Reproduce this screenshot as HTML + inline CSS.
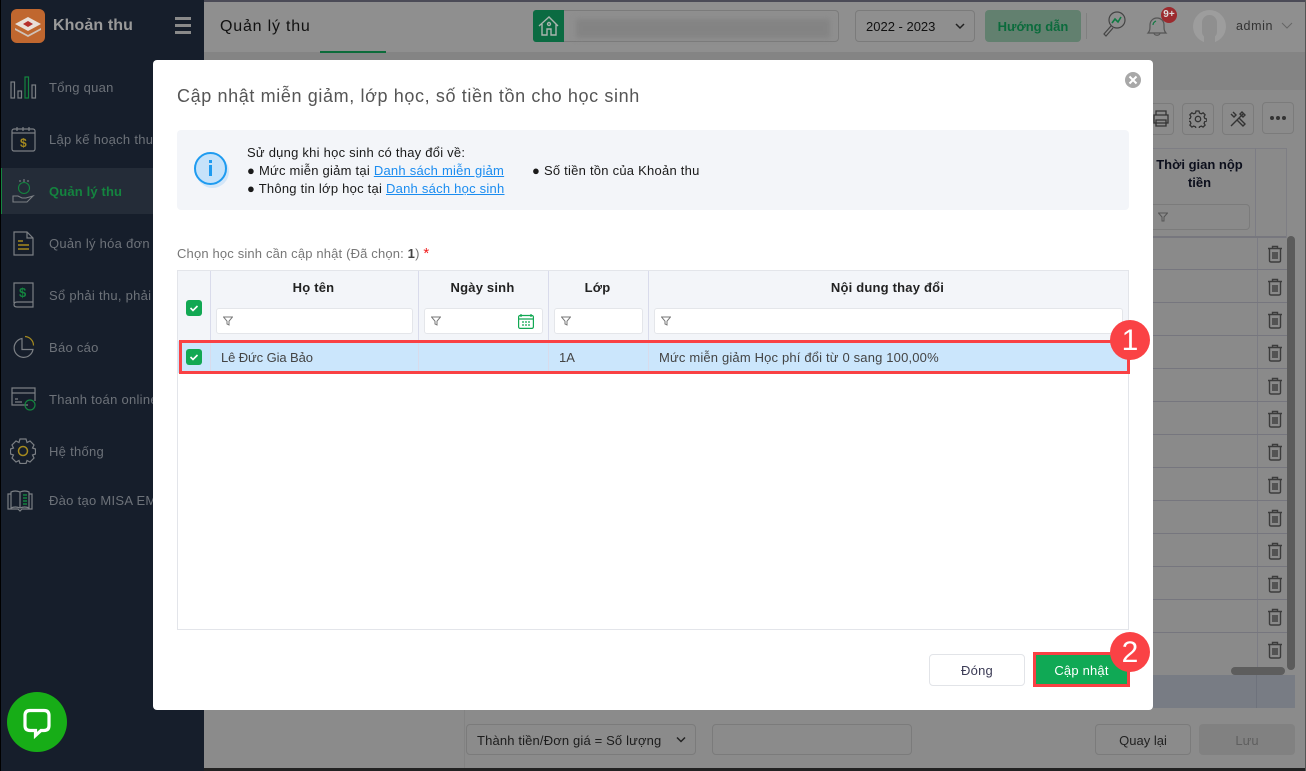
<!DOCTYPE html>
<html lang="vi"><head><meta charset="utf-8"><title>Khoản thu</title>
<style>
*{box-sizing:border-box}
html,body{margin:0;padding:0;width:1306px;height:771px;overflow:hidden;background:#8b8b8b}
body{position:relative;font-family:"Liberation Sans","Noto Sans CJK SC",sans-serif;font-size:13px;color:#222}
.a{position:absolute}
.t{position:absolute;white-space:nowrap;line-height:18px;transform:translateY(1px)}
.m{position:absolute;left:49px;white-space:nowrap;color:#6d7279;font-size:13px;line-height:18px;letter-spacing:.28px;transform:translateY(1px)}
.b{position:absolute;border:1px solid #7b7b7b;border-radius:4px}
.th{position:absolute;text-align:center;font-weight:700;font-size:13px;color:#222;top:278px;line-height:18px;letter-spacing:.2px;transform:translate(-1px,1px)}
.inp{position:absolute;top:308px;height:26px;background:#fff;border:1px solid #e4e6ea;border-radius:3px}
.inp svg{position:absolute;left:6px;top:7px}
.cb{position:absolute;left:186px;width:16px;height:16px;border-radius:3px;background:#12a853}
.vl{position:absolute;width:1px}
.tr{position:absolute;left:1267px}
.i{letter-spacing:.24px}
</style></head><body>
<!-- background app -->
<div class="a" style="left:0;top:0;width:1306px;height:2px;background:#4b4b57"></div>
<div class="a" style="left:204px;top:2px;width:1102px;height:50px;background:#8f8f8f"></div>
<div class="a" style="left:204px;top:52px;width:1102px;height:38px;background:#848484"></div>
<div class="a" style="left:320px;top:51px;width:66px;height:2px;background:#0c6b3a"></div>
<div class="t" style="left:220px;top:16px;font-size:16px;line-height:20px;color:#111;letter-spacing:.8px">Quản lý thu</div>
<div class="b" style="left:533px;top:10px;width:306px;height:32px"></div>
<div class="a" style="left:533px;top:10px;width:31px;height:32px;background:#0b6b42;border-radius:3px 0 0 3px"></div>
<svg class="a" style="left:538px;top:15px" width="22" height="22" viewBox="0 0 22 22" fill="none" stroke="#a9b5ae" stroke-width="1.4"><path d="M1 11 11 2l9 9M4 9v11h5v-6h4v6h5V9"/><circle cx="11" cy="9" r="1.5"/></svg>
<div class="a" style="left:576px;top:19px;width:254px;height:19px;background:#838383;filter:blur(3px)"></div>
<div class="b" style="left:855px;top:10px;width:120px;height:32px"></div>
<div class="t" style="left:866px;top:17px;color:#111;font-size:13px">2022 - 2023</div>
<svg class="a" style="left:955px;top:22px" width="10" height="8" viewBox="0 0 10 8" fill="none" stroke="#222" stroke-width="1.5"><path d="M1 2l4 4 4-4"/></svg>
<div class="a" style="left:985px;top:10px;width:96px;height:32px;background:#62806f;border-radius:4px"></div>
<div class="t" style="left:985px;top:17px;width:96px;text-align:center;font-weight:700;color:#0b6b3c;font-size:13px">Hướng dẫn</div>
<div class="a" style="left:1086px;top:13px;width:1px;height:26px;background:#808080"></div>
<svg class="a" style="left:1102px;top:11px" width="26" height="26" viewBox="0 0 26 26" fill="none" stroke="#444" stroke-width="1.2"><circle cx="15" cy="9" r="8"/><path d="M9 15 2 23l2 2 7-8"/><path d="M10 12l3-4 3 3 3-5" stroke="#0f7a42" stroke-width="1.6"/></svg>
<svg class="a" style="left:1145px;top:12px" width="24" height="26" viewBox="0 0 24 26" fill="none" stroke="#555" stroke-width="1.2"><path d="M3 21c2-2 2-4 2-8 0-4 3-7 7-7s7 3 7 7c0 4 0 6 2 8zM9 21c0 3 6 3 6 0"/><path d="M8 13c0-2 1-3 3-4" stroke="#0f7a42"/></svg>
<div class="a" style="left:1161px;top:7px;width:16px;height:16px;border-radius:50%;background:#9c2a2e;color:#ddd;font-size:10px;font-weight:700;text-align:center;line-height:16px">9+</div>
<div class="a" style="left:1193px;top:10px;width:33px;height:33px;border-radius:50%;background:#9d9d9d"></div>
<div class="a" style="left:1202px;top:15px;width:15px;height:24px;border-radius:8px;background:#8f8f8f"></div>
<div class="a" style="left:1204px;top:32px;width:11px;height:12px;background:#8f8f8f"></div>
<div class="t" style="left:1236px;top:16px;color:#333;font-size:12.5px;letter-spacing:.6px">admin</div>
<svg class="a" style="left:1281px;top:22px" width="12" height="8" viewBox="0 0 12 8" fill="none" stroke="#666" stroke-width="1"><path d="M1 1l5 5 5-5"/></svg>
<!-- toolbar behind -->
<div class="b" style="left:1150px;top:103px;width:24px;height:32px;border-left:0;border-radius:0 4px 4px 0"></div>
<svg class="a" style="left:1153px;top:109px" width="16" height="20" viewBox="0 0 16 20" fill="none" stroke="#333" stroke-width="1.3"><path d="M3 6V2h10v4M1 6h14v8H1zM3 11h10v6H3z"/></svg>
<div class="b" style="left:1182px;top:103px;width:32px;height:32px"></div>
<svg class="a" style="left:1189px;top:110px" width="18" height="18" viewBox="0 0 18 18" fill="none" stroke="#333" stroke-width="1.3"><circle cx="9" cy="9" r="2.7"/><path d="M7.5 1.500h3l.5 2 1.800.8 1.800-1 2 2-1 1.900.7 1.800 2 .5v2l-2 .5-.7 1.800 1 1.800-2 2-1.800-1-1.800.7-.5 2h-3l-.5-2-1.800-.7-1.800 1-2-2 1-1.800-.7-1.800-2-.5v-2l2-.5.7-1.800-1-1.900 2-2 1.800 1 1.800-.8z" transform="translate(-.5 -.5) scale(1)"/></svg>
<div class="b" style="left:1222px;top:103px;width:32px;height:32px"></div>
<svg class="a" style="left:1229px;top:110px" width="18" height="18" viewBox="0 0 18 18" fill="none" stroke="#333" stroke-width="1.4"><path d="M2 16 14 4M4 2l3 3-2 2-3-3M16 14l-2 2-6-6 2-2zM13 2l3 3-2 2-3-3z"/></svg>
<div class="b" style="left:1262px;top:102px;width:32px;height:32px"></div>
<div class="a" style="left:1270px;top:116px;width:4px;height:4px;border-radius:50%;background:#333;box-shadow:6px 0 #333,12px 0 #333"></div>
<!-- table behind -->
<div class="a" style="left:1153px;top:148px;width:134px;height:560px;border-top:1px solid #7e7e84;background:#8a8a8a"></div>
<div class="a" style="left:1153px;top:236px;width:134px;height:2px;background:#77777e"></div>
<div class="vl" style="left:1255px;top:148px;height:88px;background:#7c7c84"></div>
<div class="vl" style="left:1257px;top:238px;height:437px;background:#7c7c84"></div>
<div class="a" style="left:1286px;top:148px;width:1px;height:90px;background:#7e7e84"></div>
<div class="t" style="left:1153px;top:155px;width:93px;text-align:center;font-weight:700;color:#0c0f1c;font-size:13px;white-space:normal">Thời gian nộp tiền</div>
<div class="b" style="left:1148px;top:204px;width:102px;height:26px"></div>
<svg class="a" style="left:1158px;top:212px" width="10" height="10" viewBox="0 0 10 10" fill="none" stroke="#555"><path d="M.5 1h9L6 5v4H4V5z"/></svg>
<div class="a" style="left:1153px;top:269px;width:134px;height:396px;background:repeating-linear-gradient(to bottom,#76767e 0 1px,transparent 1px 33px)"></div>
<div class="a" style="left:1153px;top:675px;width:142px;height:33px;background:#787c84"></div>
<div class="vl" style="left:1256px;top:675px;height:33px;background:#6e727c"></div>
<div class="a" style="left:1287px;top:236px;width:8px;height:434px;background:#5b5b5b;border-radius:4px"></div>
<div class="a" style="left:1231px;top:667px;width:54px;height:8px;background:#5d5d5d;border-radius:4px"></div>
<svg width="0" height="0" style="position:absolute"><defs><symbol id="tr" viewBox="0 0 16 18"><path d="M1 3.500h14M5.500 3.500V1.500h5v2M2.500 3.500v12q0 1.500 1.500 1.500h8q1.500 0 1.500-1.500v-12M6 7v7M8 7v7M10 7v7" fill="none" stroke="#3c3c3c" stroke-width="1.400"/></symbol><symbol id="fl" viewBox="0 0 10 10"><path d="M.5 1h9L6 5.200V9L4 8V5.200z" fill="none" stroke="#777" stroke-width="1"/></symbol></defs></svg>
<svg class="tr" style="top:245px" width="16" height="18"><use href="#tr"/></svg>
<svg class="tr" style="top:278px" width="16" height="18"><use href="#tr"/></svg>
<svg class="tr" style="top:311px" width="16" height="18"><use href="#tr"/></svg>
<svg class="tr" style="top:344px" width="16" height="18"><use href="#tr"/></svg>
<svg class="tr" style="top:377px" width="16" height="18"><use href="#tr"/></svg>
<svg class="tr" style="top:410px" width="16" height="18"><use href="#tr"/></svg>
<svg class="tr" style="top:443px" width="16" height="18"><use href="#tr"/></svg>
<svg class="tr" style="top:476px" width="16" height="18"><use href="#tr"/></svg>
<svg class="tr" style="top:509px" width="16" height="18"><use href="#tr"/></svg>
<svg class="tr" style="top:542px" width="16" height="18"><use href="#tr"/></svg>
<svg class="tr" style="top:575px" width="16" height="18"><use href="#tr"/></svg>
<svg class="tr" style="top:608px" width="16" height="18"><use href="#tr"/></svg>
<svg class="tr" style="top:641px" width="16" height="18"><use href="#tr"/></svg>
<!-- footer behind -->
<div class="vl" style="left:464px;top:710px;height:58px;background:#838383"></div>
<div class="b" style="left:466px;top:724px;width:230px;height:31px"></div>
<div class="t" style="left:477px;top:731px;color:#1c1c1c;font-size:13px;letter-spacing:.15px">Thành tiền/Đơn giá = Số lượng</div>
<svg class="a" style="left:676px;top:736px" width="10" height="8" viewBox="0 0 10 8" fill="none" stroke="#222" stroke-width="1.500"><path d="M1 1.500l4 4 4-4"/></svg>
<div class="b" style="left:712px;top:724px;width:200px;height:31px"></div>
<div class="b" style="left:1095px;top:724px;width:96px;height:31px"></div>
<div class="t" style="left:1095px;top:731px;width:96px;text-align:center;color:#222;font-size:13px">Quay lại</div>
<div class="a" style="left:1199px;top:724px;width:96px;height:31px;background:#818181;border-radius:4px"></div>
<div class="t" style="left:1199px;top:731px;width:96px;text-align:center;color:#5f5f5f;font-size:13px">Lưu</div>
<div class="a" style="left:204px;top:768px;width:1102px;height:3px;background:#222"></div>
<div class="a" style="left:1305px;top:0;width:1px;height:771px;background:#555"></div>
<!-- sidebar -->
<div class="a" style="left:0;top:0;width:204px;height:771px;background:#161e2b;border-left:1px solid #000"></div>
<div class="a" style="left:11px;top:9px;width:34px;height:34px;border-radius:6px;background:#c0672f"></div>
<svg class="a" style="left:14px;top:16px" width="28" height="22" viewBox="0 0 28 22"><path d="M14 1l13 7-13 7L1 8z" fill="#e8dfd8"/><path d="M1 12l13 7 13-7v2l-13 7-13-7z" fill="#cfc3b9"/><path d="M9 8l5-3 5 3-5 3z" fill="#b52f2b"/></svg>
<div class="t" style="left:53px;top:15px;font-size:16px;line-height:20px;font-weight:700;color:#9a9a9a;letter-spacing:.1px">Khoản thu</div>
<div class="a" style="left:175px;top:17px;width:16px;height:2.500px;background:#8a8a8a;box-shadow:0 7px #8a8a8a,0 14px #8a8a8a"></div>
<div class="a" style="left:1px;top:168px;width:203px;height:46px;background:#242c38;border-left:1px solid #14843f"></div>
<svg class="a" style="left:10px;top:76px" width="27" height="23" viewBox="0 0 27 23" fill="none" stroke="#7b7f84" stroke-width="1.200"><rect x="1" y="6" width="3.500" height="16"/><rect x="8" y="15" width="3.500" height="7"/><rect x="15" y="1" width="3.500" height="21" stroke="#14843f"/><rect x="22" y="9" width="3.500" height="13"/></svg>
<svg class="a" style="left:11px;top:126px" width="25" height="26" viewBox="0 0 25 26" fill="none" stroke="#7b7f84" stroke-width="1.200"><rect x="1" y="3" width="23" height="22" rx="2"/><path d="M1 7h23M6 1v4M12 1v4M18 1v4"/><text x="9" y="21" font-size="12" font-weight="700" fill="#a58a1f" stroke="none" font-family="Liberation Sans">$</text></svg>
<svg class="a" style="left:12px;top:178px" width="23" height="27" viewBox="0 0 23 27" fill="none" stroke="#7b7f84" stroke-width="1.100"><circle cx="12" cy="10" r="5.500" stroke="#14843f"/><path d="M12 1v3M8 2v2M16 2v2M1 18h5l4 2h4l7-2-6 6H1z"/></svg>
<svg class="a" style="left:13px;top:231px" width="21" height="25" viewBox="0 0 21 25" fill="none" stroke="#7b7f84" stroke-width="1.200"><path d="M1 1h13l6 6v17H1zM14 1v6h6"/><path d="M5 10h5M5 14h11M5 18h11" stroke="#a58a1f" stroke-width="1.500"/></svg>
<svg class="a" style="left:13px;top:282px" width="21" height="26" viewBox="0 0 21 26" fill="none" stroke="#7b7f84" stroke-width="1.200"><path d="M1 21V1h19v19H4q-3 0-3 2.500T4 25h16v-5"/><text x="6" y="15" font-size="13" font-weight="700" fill="#14843f" stroke="none" font-family="Liberation Sans">$</text></svg>
<svg class="a" style="left:12px;top:335px" width="23" height="24" viewBox="0 0 23 24" fill="none" stroke="#7b7f84" stroke-width="1.200"><path d="M10 3.500a9.500 9.500 0 1 0 11 11H10z"/><path d="M13 1.500a9 9 0 0 1 8.500 9" stroke="#a58a1f"/></svg>
<svg class="a" style="left:11px;top:387px" width="25" height="24" viewBox="0 0 25 24" fill="none" stroke="#7b7f84" stroke-width="1.200"><path d="M17 18H1V1h23v13M1 6h23M4 12h3M4 15h7"/><circle cx="19" cy="18" r="5" stroke="#14843f"/></svg>
<svg class="a" style="left:10px;top:438px" width="26" height="26" viewBox="0 0 26 26" fill="none" stroke="#7b7f84" stroke-width="1.200"><path d="M10 1h6l1 3.500 3-1.500 4 4-1.500 3 3 1v5l-3 1 1.500 3-4 4-3-1.500-1 3h-6l-1-3-3 1.500-4-4 1.500-3-3-1v-5l3-1L2 7l4-4 3 1.500z"/><circle cx="13" cy="13" r="4.500" stroke="#a58a1f" stroke-width="1.500"/></svg>
<svg class="a" style="left:7px;top:489px" width="27" height="23" viewBox="0 0 27 23" fill="none" stroke="#7b7f84" stroke-width="1.200"><path d="M13 3q-5-2-9 0v16q4-2 9 0q5-2 9 0V3q-4-2-9 0zM13 3v16M4 5H1v15h10l2 2 2-2h10V5h-3"/><path d="M16 6h4M16 9h4M16 12h4M16 15h4" stroke="#14843f" stroke-width="1.500"/></svg>
<div class="m" style="top:78px">Tổng quan</div>
<div class="m" style="top:130px">Lập kế hoạch thu</div>
<div class="m" style="top:182px;color:#14843f;font-weight:700;letter-spacing:.15px">Quản lý thu</div>
<div class="m" style="top:234px">Quản lý hóa đơn</div>
<div class="m" style="top:286px">Sổ phải thu, phải trả</div>
<div class="m" style="top:338px">Báo cáo</div>
<div class="m" style="top:390px">Thanh toán online</div>
<div class="m" style="top:442px">Hệ thống</div>
<div class="m" style="top:491px">Đào tạo MISA EMIS</div>
<div class="a" style="left:7px;top:692px;width:60px;height:60px;border-radius:50%;background:#17ad17"></div>
<svg class="a" style="left:22px;top:707px" width="30" height="32" viewBox="0 0 30 32" fill="none"><path d="M8 3.500h14q5 0 5 5v10q0 5-5 5h-3l-5.500 5v-5H8q-5 0-5-5v-10q0-5 5-5z" stroke="#fff" stroke-width="3.200"/></svg>
<!-- modal -->
<div class="a" style="left:153px;top:60px;width:1000px;height:650px;background:#fff;border-radius:4px"></div>
<div class="t" style="left:177px;top:84px;font-size:18px;line-height:22px;color:#555;letter-spacing:.62px">Cập nhật miễn giảm, lớp học, số tiền tồn cho học sinh</div>
<div class="a" style="left:1125px;top:72px;width:16px;height:16px;border-radius:50%;background:#a8a8a8"></div>
<svg class="a" style="left:1125px;top:72px" width="16" height="16" fill="none" stroke="#fff" stroke-width="2"><path d="M4.500 4.500l7 7M11.500 4.500l-7 7"/></svg>
<div class="a" style="left:177px;top:130px;width:952px;height:80px;background:#f3f5f9;border-radius:4px"></div>
<div class="a" style="left:196px;top:155px;width:33px;height:33px;border-radius:50%;background:#d3e6f8"></div>
<div class="a" style="left:194px;top:152px;width:33px;height:33px;border-radius:50%;background:#c5e2fa;border:2px solid #1e9bf0"></div>
<div class="a" style="left:209px;top:160px;width:3px;height:3px;background:#1e9bf0"></div>
<div class="a" style="left:209px;top:165px;width:3px;height:11px;background:#1e9bf0"></div>
<div class="t i" style="left:247px;top:143px;color:#1a1a1a">Sử dụng khi học sinh có thay đổi về:</div>
<div class="t i" style="left:247px;top:161px;color:#1a1a1a">● Mức miễn giảm tại <span style="color:#1a8cf0;text-decoration:underline">Danh sách miễn giảm</span></div>
<div class="t i" style="left:532px;top:161px;color:#1a1a1a">● Số tiền tồn của Khoản thu</div>
<div class="t i" style="left:247px;top:179px;color:#1a1a1a">● Thông tin lớp học tại <span style="color:#1a8cf0;text-decoration:underline">Danh sách học sinh</span></div>
<div class="t" style="left:177px;top:244px;color:#777;letter-spacing:.16px">Chọn học sinh cần cập nhật (Đã chọn: <b style="color:#444">1</b>) <span style="color:#f01c1c;font-size:15px">*</span></div>
<!-- table -->
<div class="a" style="left:177px;top:270px;width:952px;height:360px;border:1px solid #e3e5ea;background:#fff"></div>
<div class="a" style="left:178px;top:271px;width:950px;height:70px;background:#f3f5f9"></div>
<div class="a" style="left:178px;top:341px;width:950px;height:32px;background:#cbe6fc"></div>
<div class="vl" style="left:210px;top:271px;height:102px;background:#d9dbeb"></div>
<div class="vl" style="left:418px;top:271px;height:102px;background:#d9dbeb"></div>
<div class="vl" style="left:548px;top:271px;height:102px;background:#d9dbeb"></div>
<div class="vl" style="left:648px;top:271px;height:102px;background:#d9dbeb"></div>
<div class="th" style="left:211px;width:207px">Họ tên</div>
<div class="th" style="left:419px;width:129px">Ngày sinh</div>
<div class="th" style="left:549px;width:99px">Lớp</div>
<div class="th" style="left:649px;width:479px">Nội dung thay đổi</div>
<div class="inp" style="left:216px;width:197px"><svg width="10" height="10"><use href="#fl"/></svg></div>
<div class="inp" style="left:424px;width:119px"><svg width="10" height="10"><use href="#fl"/></svg></div>
<svg class="a" style="left:518px;top:314px" width="16" height="15" viewBox="0 0 16 15" fill="none" stroke="#12a853" stroke-width="1.200"><rect x=".6" y="1.500" width="14.800" height="12.900" rx="1.500"/><path d="M.6 5h14.800M3 0v3M13 0v3M4 8h2M7 8h2M10 8h2M4 11h2M7 11h2M10 11h2"/></svg>
<div class="inp" style="left:554px;width:89px"><svg width="10" height="10"><use href="#fl"/></svg></div>
<div class="inp" style="left:654px;width:469px"><svg width="10" height="10"><use href="#fl"/></svg></div>
<div class="cb" style="top:300px"><svg width="16" height="16" fill="none" stroke="#fff" stroke-width="1.600"><path d="M4.500 8l2.500 2.500 4.500-4.500"/></svg></div>
<div class="cb" style="top:349px"><svg width="16" height="16" fill="none" stroke="#fff" stroke-width="1.600"><path d="M4.500 8l2.500 2.500 4.500-4.500"/></svg></div>
<div class="t" style="left:221px;top:348px;color:#444;letter-spacing:-.1px">Lê Đức Gia Bảo</div>
<div class="t" style="left:559px;top:348px;color:#444">1A</div>
<div class="t" style="left:659px;top:348px;color:#444;letter-spacing:.17px">Mức miễn giảm Học phí đổi từ 0 sang 100,00%</div>
<div class="a" style="left:179px;top:340px;width:951px;height:34px;border:3px solid #f94144"></div>
<div class="a" style="left:1110px;top:320px;width:40px;height:40px;border-radius:50%;background:#fa4245;color:#fff;font-size:30px;text-align:center;line-height:42px">1</div>
<!-- buttons -->
<div class="a" style="left:929px;top:654px;width:96px;height:32px;border:1px solid #e2e4e8;border-radius:4px;background:#fff;text-align:center;line-height:32px;color:#3b3b55;font-size:13px;letter-spacing:.2px">Đóng</div>
<div class="a" style="left:1033px;top:652px;width:97px;height:35px;border:3px solid #f94144;background:#10a955;color:#fff;font-size:13px;text-align:center;line-height:31px;letter-spacing:.2px">Cập nhật</div>
<div class="a" style="left:1110px;top:632px;width:40px;height:40px;border-radius:50%;background:#fa4245;color:#fff;font-size:30px;text-align:center;line-height:42px">2</div>
</body></html>
